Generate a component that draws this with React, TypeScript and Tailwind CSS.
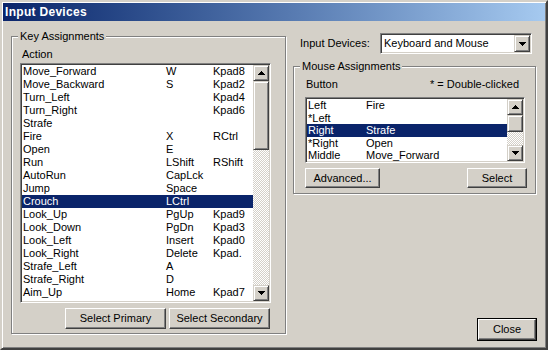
import { clsx } from 'clsx';

const raised =
  'border border-t-white border-l-white border-b-[#404040] border-r-[#404040] shadow-[inset_-1px_-1px_0_#808080] bg-[#d4d0c8]';
const scrollBtn =
  'border border-t-[#d4d0c8] border-l-[#d4d0c8] border-b-[#404040] border-r-[#404040] shadow-[inset_1px_1px_0_#ffffff,inset_-1px_-1px_0_#808080] bg-[#d4d0c8]';
const sunken =
  'border border-t-[#808080] border-l-[#808080] border-b-white border-r-white shadow-[inset_1px_1px_0_#404040,inset_-1px_-1px_0_#d4d0c8]';
const etched = 'border border-[#808080] shadow-[inset_1px_1px_0_#ffffff,1px_1px_0_#ffffff]';

const keyRows: [string, string, string][] = [
  ['Move_Forward', 'W', 'Kpad8'],
  ['Move_Backward', 'S', 'Kpad2'],
  ['Turn_Left', '', 'Kpad4'],
  ['Turn_Right', '', 'Kpad6'],
  ['Strafe', '', ''],
  ['Fire', 'X', 'RCtrl'],
  ['Open', 'E', ''],
  ['Run', 'LShift', 'RShift'],
  ['AutoRun', 'CapLck', ''],
  ['Jump', 'Space', ''],
  ['Crouch', 'LCtrl', ''],
  ['Look_Up', 'PgUp', 'Kpad9'],
  ['Look_Down', 'PgDn', 'Kpad3'],
  ['Look_Left', 'Insert', 'Kpad0'],
  ['Look_Right', 'Delete', 'Kpad.'],
  ['Strafe_Left', 'A', ''],
  ['Strafe_Right', 'D', ''],
  ['Aim_Up', 'Home', 'Kpad7'],
  ['Aim_Down', 'End', 'Kpad1']
];

const mouseRows: [string, string][] = [
  ['Left', 'Fire'],
  ['*Left', ''],
  ['Right', 'Strafe'],
  ['*Right', 'Open'],
  ['Middle', 'Move_Forward']
];

function Arrow({ up }: { up?: boolean }) {
  return (
    <svg width="7" height="4" viewBox="0 0 7 4" shapeRendering="crispEdges">
      {up ? (
        <path d="M3 0h1v1h1v1h1v1h1v1H0V3h1V2h1V1h1z" fill="#000" />
      ) : (
        <path d="M0 0h7v1H6v1H5v1H4v1H3V3H2V2H1V1H0z" fill="#000" />
      )}
    </svg>
  );
}

function ScrollBar({ thumb }: { thumb: number }) {
  return (
    <div className="flex flex-col w-[16px] h-full shrink-0">
      <div className={clsx(scrollBtn, 'h-[16px] flex items-center justify-center')}>
        <Arrow up />
      </div>
      <div className={clsx(scrollBtn, 'shrink-0')} style={{ height: thumb }} />
      <div className="flex-1 bg-[image:repeating-conic-gradient(#ffffff_0_25%,#d4d0c8_0_50%)] bg-[length:2px_2px]" />
      <div className={clsx(scrollBtn, 'h-[16px] flex items-center justify-center')}>
        <Arrow />
      </div>
    </div>
  );
}

function Button({ label, className }: { label: string; className?: string }) {
  return (
    <div className={clsx(raised, 'flex items-center justify-center', className)}>{label}</div>
  );
}

export default function App() {
  return (
    <div className="w-[548px] h-[350px] flex flex-col p-[1px] bg-[#d4d0c8] border-2 border-t-[#d4d0c8] border-l-[#d4d0c8] border-b-[#404040] border-r-[#404040] shadow-[inset_1px_1px_0_#ffffff,inset_-1px_-1px_0_#808080] font-['Liberation_Sans',Arial,sans-serif] text-[11px] text-black overflow-hidden">
      <div className="h-[18px] shrink-0 flex items-center pl-[2px] bg-gradient-to-r from-[#0a246a] to-[#a6caf0] text-white font-bold text-[12px] tracking-[0.3px]">
        Input Devices
      </div>

      <div className="flex flex-1 pl-[8px] pb-[6px]">
        {/* key assignments */}
        <div className={clsx(etched, 'relative mt-[15px] w-[275px] h-[298px] pl-[8px] pt-[11px]')}>
          <div className="absolute -top-[7px] left-[6px] px-[2px] bg-[#d4d0c8] leading-[13px]">Key Assignments</div>
          <div className="h-[13px] leading-[13px] pl-[2px] mb-[2px]">Action</div>
          <div className={clsx(sunken, 'w-[251px] h-[240px] p-[1px] bg-white flex')}>
            <div className="flex-1 overflow-hidden">
              {keyRows.map(([a, k1, k2]) => (
                <div
                  key={a}
                  className={clsx(
                    'flex h-[13px] leading-[13px] pl-[1px] whitespace-nowrap',
                    a === 'Crouch' && 'bg-[#0a246a] text-white'
                  )}
                >
                  <span className="w-[143px]">{a}</span>
                  <span className="w-[47px]">{k1}</span>
                  <span>{k2}</span>
                </div>
              ))}
            </div>
            <ScrollBar thumb={69} />
          </div>
          <div className="w-[251px] flex justify-end gap-[3px] mt-[5px] pr-[1px]">
            <Button label="Select Primary" className="w-[101px] h-[21px]" />
            <Button label="Select Secondary" className="w-[101px] h-[21px]" />
          </div>
        </div>

        {/* right column */}
        <div className="ml-[7px] w-[244px] flex flex-col">
          <div className="flex items-center mt-[12px] h-[21px]">
            <span className="ml-[7px]">Input Devices:</span>
            <div className={clsx(sunken, 'ml-auto mr-[5px] w-[152px] h-[21px] p-[1px] bg-white flex items-stretch')}>
              <span className="flex-1 pl-[2px] leading-[17px]">Keyboard and Mouse</span>
              <div className={clsx(scrollBtn, 'w-[16px] flex items-center justify-center')}>
                <Arrow />
              </div>
            </div>
          </div>

          <div className={clsx(etched, 'relative mt-[12px] w-[243px] h-[128px] pl-[11px] pt-[11px]')}>
            <div className="absolute -top-[7px] left-[6px] px-[2px] bg-[#d4d0c8] leading-[13px]">Mouse Assignments</div>
            <div className="w-[220px] flex justify-between h-[13px] leading-[13px] pr-[6px] mb-[6px]">
              <span className="pl-[1px]">Button</span>
              <span>* = Double-clicked</span>
            </div>
            <div className={clsx(sunken, 'w-[220px] h-[66px] p-[1px] bg-white flex')}>
              <div className="flex-1 overflow-hidden">
                {mouseRows.map(([b, a]) => (
                  <div
                    key={b}
                    className={clsx(
                      'flex h-[12.5px] leading-[12.5px] pl-[1px] whitespace-nowrap',
                      b === 'Right' && 'bg-[#0a246a] text-white'
                    )}
                  >
                    <span className="w-[58px]">{b}</span>
                    <span>{a}</span>
                  </div>
                ))}
              </div>
              <ScrollBar thumb={17} />
            </div>
            <div className="w-[222px] flex justify-between mt-[5px]">
              <Button label="Advanced..." className="w-[75px] h-[20px]" />
              <Button label="Select" className="w-[60px] h-[20px]" />
            </div>
          </div>

          <div className="mt-auto self-end border border-black">
            <Button label="Close" className="w-[58px] h-[21px]" />
          </div>
        </div>
      </div>
    </div>
  );
}
